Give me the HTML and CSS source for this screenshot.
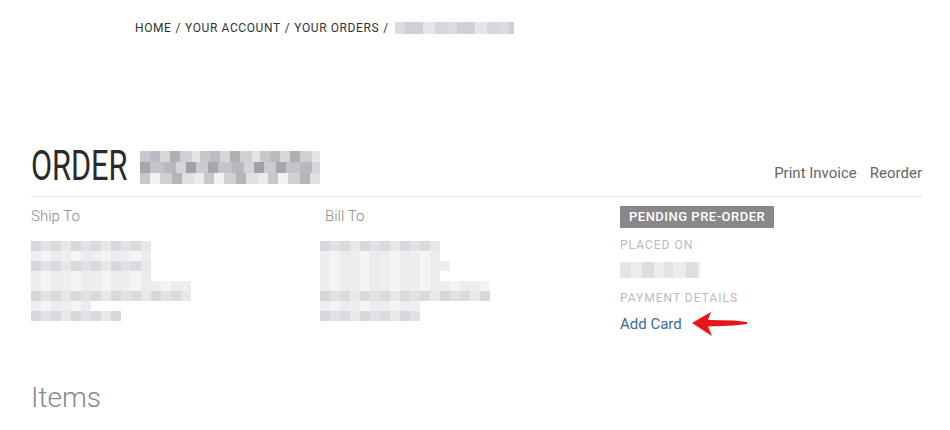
FILE: index.html
```html
<!DOCTYPE html>
<html lang="en">
  <head>
    <meta charset="UTF-8" />
    <meta name="viewport" content="width=device-width, initial-scale=1.0" />
    <title>Order details</title>
    <link rel="stylesheet" href="styles.css">
  </head>
  <body>
    <nav class="crumbs">
      <span>Home</span> / <span>Your Account</span> / <span>Your Orders</span> /
      <span class="blur crumb-id"></span>
    </nav>
    <main>
      <div class="order-head">
        <h1><span class="order-word">Order</span><span class="blur order-id"></span></h1>
        <div class="actions">
          <a href="#">Print Invoice</a>
          <a href="#">Reorder</a>
        </div>
      </div>
      <section class="details">
        <div class="col">
          <h3>Ship To</h3>
          <div class="addr">
            <i class="mid w120"></i>
            <i class="faint w120"></i>
            <i class="mid w120"></i>
            <i class="faint w120"></i>
            <i class="faint w160"></i>
            <i class="mid w160"></i>
            <i class="faint w60"></i>
            <i class="mid w90"></i>
          </div>
        </div>
        <div class="col">
          <h3>Bill To</h3>
          <div class="addr bill">
            <i class="mid w120"></i>
            <i class="faint w120"></i>
            <i class="faint w130"></i>
            <i class="faint w120"></i>
            <i class="faint w170"></i>
            <i class="mid w170"></i>
            <i class="faint w100"></i>
            <i class="mid w100"></i>
          </div>
        </div>
        <div class="col">
          <span class="badge">Pending Pre-Order</span>
          <div class="label">Placed On</div>
          <div class="blur date"></div>
          <div class="label pay-label">Payment Details</div>
          <div class="pay">
            <a href="#">Add Card</a>
            <svg class="arrow" width="56" height="26" viewBox="0 0 56 26">
              <path d="M0 12 L19 1 L16 9 L42 9.5 L55 11 L55 13 L42 14.5 L16 15.5 L20 25 Z" fill="#e8141a" />
            </svg>
          </div>
        </div>
      </section>
      <h2 class="items">Items</h2>
    </main>
  </body>
</html>
```

FILE: styles.css
```css
* {
  margin: 0;
  padding: 0;
  box-sizing: border-box;
}
body {
  font-family: Roboto, "Liberation Sans", sans-serif;
  background-color: #fff;
  color: #333;
}
a {
  text-decoration: none;
}
.crumbs {
  padding: 15px 0 0 135px;
  height: 40px;
  font-size: 12px;
  letter-spacing: 0.6px;
  text-transform: uppercase;
  color: #333;
  display: flex;
  align-items: center;
  gap: 4px;
}
.crumbs span {
  line-height: 14px;
}
.blur {
  display: inline-block;
  background-color: #ddd;
}
.crumb-id {
  width: 119px;
  height: 12px;
  margin-left: 2px;
  background: repeating-linear-gradient(90deg, #dcdce0 0 10px, #cfcfd6 10px 28px, #e6e6ea 28px 40px, #d6d6dc 40px 52px);
}
main {
  padding: 103px 28px 0 31px;
}
.order-head {
  display: flex;
  justify-content: space-between;
  align-items: flex-end;
  border-bottom: 1px solid #e0e0e0;
  padding-bottom: 7px;
}
h1 {
  display: flex;
  align-items: center;
  font-weight: 400;
  font-size: 42px;
  line-height: 46px;
  color: #2a2a2a;
  text-transform: uppercase;
}
.order-word {
  display: inline-block;
  transform: scaleX(0.73);
  transform-origin: left center;
  width: 109px;
}
.order-id {
  width: 180px;
  height: 33px;
  margin-top: 2px;
  background:
    repeating-linear-gradient(90deg, #c8c8cc 0 10px, #b9bcc2 10px 20px, #d9d6d8 20px 30px, #aeb0b5 30px 40px, #cdd0d4 40px 52px, #e4e4e8 52px 60px) 0 0 / 100% 11px no-repeat,
    repeating-linear-gradient(90deg, #a9a5a8 0 10px, #c2c4c9 10px 24px, #b5b8bc 24px 36px, #d6d4d6 36px 46px, #9fa3a7 46px 56px, #c9cbd0 56px 68px) 0 11px / 100% 11px no-repeat,
    repeating-linear-gradient(90deg, #c6c8cb 0 10px, #f0f2f5 10px 20px, #cfd0d2 20px 32px, #b3b5b9 32px 42px, #dfe0e2 42px 54px, #eaeaec 54px 64px) 0 22px / 100% 11px no-repeat;
}
.actions {
  display: flex;
  gap: 13px;
  padding-bottom: 7px;
}
.actions a {
  font-size: 15px;
  color: #666;
}
.details {
  display: grid;
  grid-template-columns: 294px 295px 1fr;
  padding-top: 9px;
}
.col h3 {
  font-size: 15px;
  font-weight: 300;
  color: #888;
  line-height: 20px;
}
.addr {
  margin-top: 15px;
  display: flex;
  flex-direction: column;
}
.addr.bill {
  margin-left: -5px;
}
.addr i {
  display: block;
  height: 10px;
}
.addr .mid {
  background: repeating-linear-gradient(90deg, #d8d8dc 0 10px, #e2e2e6 10px 20px, #dadade 20px 30px, #e8e8eb 30px 40px);
}
.addr .faint {
  background: repeating-linear-gradient(90deg, #eeeef0 0 10px, #f4f4f6 10px 20px, #ececef 20px 30px);
}
.w60 { width: 60px; }
.w90 { width: 90px; }
.w100 { width: 100px; }
.w120 { width: 120px; }
.w130 { width: 130px; }
.w160 { width: 160px; }
.w170 { width: 170px; }
.badge {
  display: inline-block;
  background-color: #888;
  color: #fff;
  font-size: 13px;
  font-weight: 500;
  letter-spacing: 0.5px;
  text-transform: uppercase;
  padding: 4px 9px;
  line-height: 14px;
}
.label {
  font-size: 12px;
  letter-spacing: 1px;
  text-transform: uppercase;
  color: #bbb;
  margin-top: 10px;
  line-height: 14px;
}
.pay-label {
  margin-top: 9px;
}
.date {
  width: 80px;
  height: 16px;
  margin-top: 10px;
  background: repeating-linear-gradient(90deg, #e4e4e6 0 10px, #ececee 10px 22px, #dedee0 22px 34px, #eeeef0 34px 44px);
}
.pay {
  display: flex;
  align-items: center;
  gap: 10px;
  margin-top: 6px;
}
.pay a {
  font-size: 15px;
  color: #3b6a9e;
}
.items {
  margin-top: 44px;
  font-size: 28px;
  font-weight: 300;
  color: #888;
}
```
